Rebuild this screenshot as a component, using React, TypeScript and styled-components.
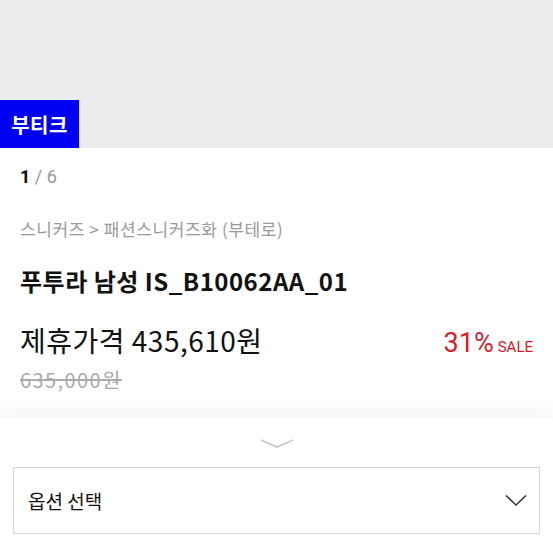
import React from "react";
import styled, { createGlobalStyle } from "styled-components";

const Global = createGlobalStyle`
  html, body { margin: 0; padding: 0; background: #fff; }
  body { font-family: "Noto Sans CJK KR", "Noto Sans", sans-serif; overflow: hidden; }
`;

const Page = styled.div`
  width: 553px;
  height: 553px;
  display: flex;
  flex-direction: column;
  overflow: hidden;
`;

const Hero = styled.div`
  height: 148px;
  flex-shrink: 0;
  background: #ebebee;
  display: flex;
  align-items: flex-end;
`;

const Badge = styled.div`
  width: 79px;
  height: 48px;
  background: #0000f5;
  color: #fff;
  font-size: 20px;
  font-weight: 700;
  letter-spacing: 0.5px;
  display: flex;
  align-items: center;
  justify-content: center;
`;

const Info = styled.div`
  padding: 0 20px;
  display: flex;
  flex-direction: column;
  height: 270px;
  flex-shrink: 0;
`;

const Counter = styled.div`
  margin-top: 17px;
  font-size: 18px;
  line-height: 24px;
  color: #999;
  font-family: "Roboto", sans-serif;
`;

const Current = styled.span`
  color: #111;
  font-weight: 700;
`;

const Crumbs = styled.div`
  margin-top: 28px;
  font-size: 17px;
  line-height: 24px;
  color: #9a9a9a;
  letter-spacing: 0.6px;
`;

const Title = styled.h1`
  margin: 25px 0 0;
  font-size: 24px;
  line-height: 30px;
  font-weight: 700;
  color: #111;
  letter-spacing: 0.5px;
`;

const PriceRow = styled.div`
  margin-top: 27px;
  display: flex;
  align-items: baseline;
  justify-content: space-between;
`;

const Price = styled.div`
  font-size: 28px;
  line-height: 34px;
  color: #111;
  letter-spacing: 0.5px;
`;

const Sale = styled.div`
  color: #d4202c;
  font-size: 27px;
  line-height: 34px;
  font-family: "Roboto", sans-serif;
  display: flex;
  align-items: baseline;
  gap: 4px;
`;

const SaleLabel = styled.span`
  font-size: 15px;
`;

const OldPrice = styled.div`
  margin-top: 3px;
  font-size: 20px;
  line-height: 26px;
  color: #aaa;
  letter-spacing: 1.4px;
  text-decoration: line-through;
`;

const Sheet = styled.div`
  flex: 1;
  background: #fff;
  box-shadow: 0 -8px 18px rgba(0, 0, 0, 0.045);
  display: flex;
  flex-direction: column;
  align-items: center;
  padding: 0 13px;
`;

const Handle = styled.div`
  margin-top: 20px;
  height: 12px;
  display: flex;
  margin-left: 1px;
`;

const Select = styled.div`
  margin-top: 17px;
  width: 100%;
  box-sizing: border-box;
  height: 67px;
  border: 1px solid #d8d8d8;
  display: flex;
  align-items: center;
  justify-content: space-between;
  padding: 0 12px 0 14px;
  font-size: 19px;
  color: #111;
`;

export default function App() {
  return (
    <Page>
      <Global />
      <Hero>
        <Badge>부티크</Badge>
      </Hero>
      <Info>
        <Counter>
          <Current>1</Current> / 6
        </Counter>
        <Crumbs>스니커즈 &gt; 패션스니커즈화 (부테로)</Crumbs>
        <Title>푸투라 남성 IS_B10062AA_01</Title>
        <PriceRow>
          <Price>제휴가격 435,610원</Price>
          <Sale>
            31%<SaleLabel>SALE</SaleLabel>
          </Sale>
        </PriceRow>
        <OldPrice>635,000원</OldPrice>
      </Info>
      <Sheet>
        <Handle>
          <svg width="34" height="12" viewBox="0 0 34 12">
            <path d="M1 2 L17 9 L33 2" fill="none" stroke="#c8c8c8" strokeWidth="1.8" />
          </svg>
        </Handle>
        <Select>
          <span>옵션 선택</span>
          <svg width="22" height="13" viewBox="0 0 22 13">
            <path d="M1 1.5 L11 11 L21 1.5" fill="none" stroke="#333" strokeWidth="1.5" />
          </svg>
        </Select>
      </Sheet>
    </Page>
  );
}
